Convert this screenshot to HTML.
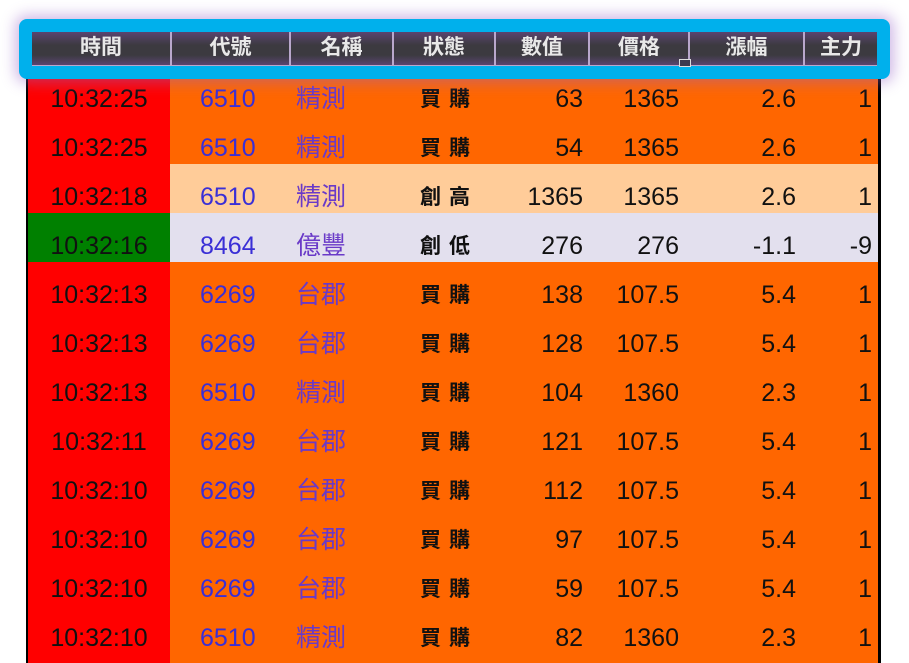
<!DOCTYPE html>
<html><head><meta charset="utf-8"><style>
*{margin:0;padding:0;box-sizing:border-box}
html,body{width:909px;height:663px;overflow:hidden}
body{background:#fff;position:relative;font-family:"Liberation Sans","Noto Sans CJK TC",sans-serif}
.tbl{position:absolute;left:26px;top:60px;width:855px;height:603px;background:#000}
.row{position:absolute;left:28px;width:850px;height:49px;background:#ff6600;overflow:hidden}
.row div{position:absolute;top:9px;height:49px;line-height:49px;font-size:25px;white-space:nowrap}
.row .t{top:0;left:0;width:142px;padding-top:9px;background:#ff0000;text-align:center;color:#111}
.c{left:172px;color:#3a2fd6}
.n{left:268px;color:#6a3ac8}
.s{left:392px;font-size:21px!important;font-weight:bold;color:#111;letter-spacing:8px}
.v{right:295px;color:#111}
.p{right:199px;color:#111}
.g{right:82px;color:#111}
.m{right:6px;color:#111}
.frame{position:absolute;left:19px;top:19px;width:871px;height:60px;background:#00b0ec;border-radius:8px;box-shadow:0 0 14px 4px rgba(150,100,200,.45)}
.hdr{position:absolute;left:32px;top:32px;width:845px;height:34px;background:linear-gradient(#5a4470,#3c3a40 40%,#3c3a40 70%,#5a4470);border-bottom:1px solid #b9a8cc}
.hdr div{position:absolute;top:0;height:33px;line-height:31px;color:#e8e8e8;font-size:21px;font-weight:bold;text-align:center;border-right:2px solid #b9a8cc}
</style></head><body>
<div class="tbl"></div>
<div class="row" style="top:66px"><div class="t">10:32:25</div><div class="c">6510</div><div class="n">精測</div><div class="s">買購</div><div class="v">63</div><div class="p">1365</div><div class="g">2.6</div><div class="m">1</div></div>
<div class="row" style="top:115px"><div class="t">10:32:25</div><div class="c">6510</div><div class="n">精測</div><div class="s">買購</div><div class="v">54</div><div class="p">1365</div><div class="g">2.6</div><div class="m">1</div></div>
<div class="row" style="top:164px;background:#ffcc99"><div class="t">10:32:18</div><div class="c">6510</div><div class="n">精測</div><div class="s">創高</div><div class="v">1365</div><div class="p">1365</div><div class="g">2.6</div><div class="m">1</div></div>
<div class="row" style="top:213px;background:#e3e0ee"><div class="t" style="background:#008000">10:32:16</div><div class="c">8464</div><div class="n">億豐</div><div class="s">創低</div><div class="v">276</div><div class="p">276</div><div class="g">-1.1</div><div class="m">-9</div></div>
<div class="row" style="top:262px"><div class="t">10:32:13</div><div class="c">6269</div><div class="n">台郡</div><div class="s">買購</div><div class="v">138</div><div class="p">107.5</div><div class="g">5.4</div><div class="m">1</div></div>
<div class="row" style="top:311px"><div class="t">10:32:13</div><div class="c">6269</div><div class="n">台郡</div><div class="s">買購</div><div class="v">128</div><div class="p">107.5</div><div class="g">5.4</div><div class="m">1</div></div>
<div class="row" style="top:360px"><div class="t">10:32:13</div><div class="c">6510</div><div class="n">精測</div><div class="s">買購</div><div class="v">104</div><div class="p">1360</div><div class="g">2.3</div><div class="m">1</div></div>
<div class="row" style="top:409px"><div class="t">10:32:11</div><div class="c">6269</div><div class="n">台郡</div><div class="s">買購</div><div class="v">121</div><div class="p">107.5</div><div class="g">5.4</div><div class="m">1</div></div>
<div class="row" style="top:458px"><div class="t">10:32:10</div><div class="c">6269</div><div class="n">台郡</div><div class="s">買購</div><div class="v">112</div><div class="p">107.5</div><div class="g">5.4</div><div class="m">1</div></div>
<div class="row" style="top:507px"><div class="t">10:32:10</div><div class="c">6269</div><div class="n">台郡</div><div class="s">買購</div><div class="v">97</div><div class="p">107.5</div><div class="g">5.4</div><div class="m">1</div></div>
<div class="row" style="top:556px"><div class="t">10:32:10</div><div class="c">6269</div><div class="n">台郡</div><div class="s">買購</div><div class="v">59</div><div class="p">107.5</div><div class="g">5.4</div><div class="m">1</div></div>
<div class="row" style="top:605px"><div class="t">10:32:10</div><div class="c">6510</div><div class="n">精測</div><div class="s">買購</div><div class="v">82</div><div class="p">1360</div><div class="g">2.3</div><div class="m">1</div></div>
<div class="row" style="top:654px;height:9px"><div class="t" style="height:9px"></div></div>
<div class="frame"></div>
<div class="hdr">
<div style="left:0;width:140px">時間</div>
<div style="left:140px;width:119px">代號</div>
<div style="left:259px;width:103px">名稱</div>
<div style="left:362px;width:102px">狀態</div>
<div style="left:464px;width:94px">數值</div>
<div style="left:558px;width:100px">價格</div>
<div style="left:658px;width:115px">漲幅</div>
<div style="left:773px;width:72px;border-right:none">主力</div>
</div>
<div style="position:absolute;left:679px;top:59px;width:12px;height:8px;border:1px solid #ddd;background:#3c3a50"></div>
</body></html>
